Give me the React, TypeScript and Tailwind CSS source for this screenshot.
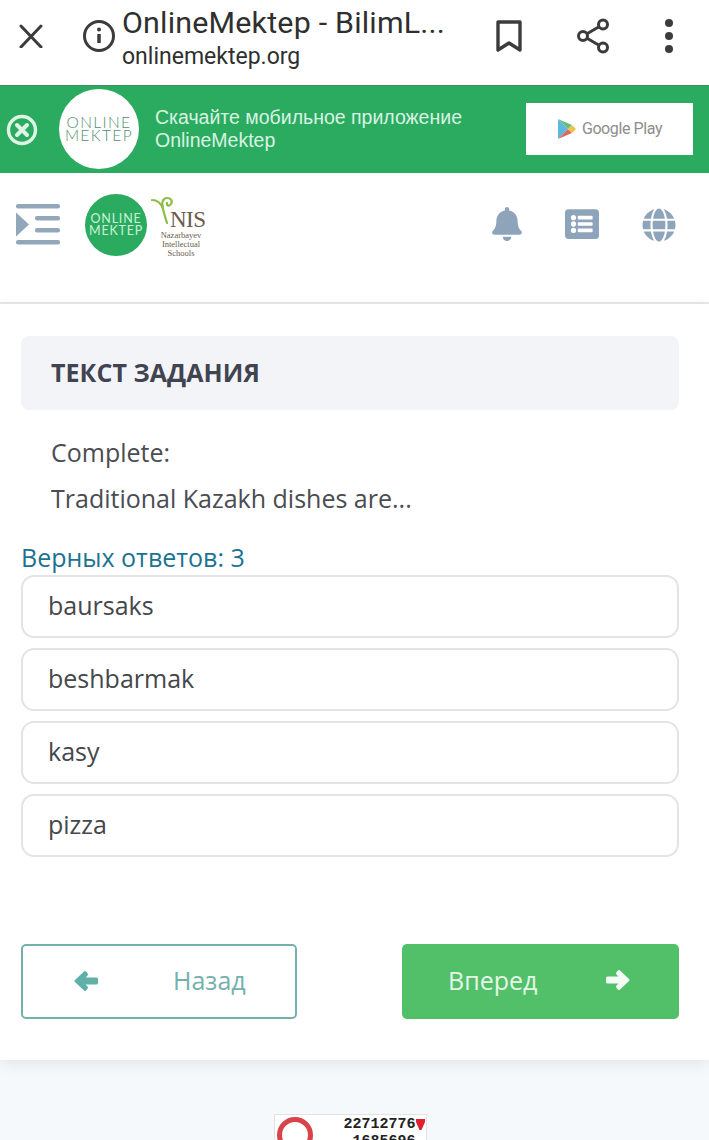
import React from 'react';
import { FaBell, FaGlobe, FaListAlt } from 'react-icons/fa';

const answers = ['baursaks', 'beshbarmak', 'kasy', 'pizza'];

function TopBar() {
  return (
    <div className="h-[85px] shrink-0 bg-white flex items-center font-['Roboto',sans-serif] text-[#2f2f2f]">
      <svg className="ml-[19px] -mt-[14px] w-[24px] h-[24px] shrink-0" viewBox="0 0 24 24" fill="none" stroke="#3c3c3c" strokeWidth="3" strokeLinecap="round">
        <path d="M2 2l20 21M22 2L2 23" />
      </svg>
      <svg className="ml-[39px] -mt-[14px] w-[34px] h-[34px] shrink-0" viewBox="0 0 34 34" fill="none" stroke="#3c3c3c">
        <circle cx="17" cy="17" r="14.5" strokeWidth="3" />
        <path d="M17 15v9" strokeWidth="3.5" />
        <circle cx="17" cy="10.5" r="2" fill="#3c3c3c" stroke="none" />
      </svg>
      <div className="ml-[6px] w-[351px] -mt-[10px]">
        <div className="text-[30.4px] leading-[36px] tracking-[0.2px] whitespace-nowrap">OnlineMektep - BilimL...</div>
        <div className="text-[23px] leading-[28px] mt-[2px]">onlinemektep.org</div>
      </div>
      <svg className="ml-[22px] -mt-[14px] w-[28px] h-[34px] shrink-0" viewBox="0 0 28 34" fill="none" stroke="#3c3c3c" strokeWidth="3.4" strokeLinejoin="round">
        <path d="M3 3h22v28l-11-7-11 7z" />
      </svg>
      <svg className="ml-[53px] -mt-[14px] w-[36px] h-[36px] shrink-0" viewBox="0 0 36 36" fill="none" stroke="#3c3c3c" strokeWidth="3">
        <circle cx="27" cy="6.5" r="4.5" />
        <circle cx="7" cy="18" r="4.5" />
        <circle cx="27" cy="29.5" r="4.5" />
        <path d="M11 15.7l12-7M11 20.3l12 7" />
      </svg>
      <div className="ml-[53px] -mt-[14px] flex flex-col gap-[5px] shrink-0">
        <span className="block w-[8px] h-[8px] rounded-full bg-[#3c3c3c]" />
        <span className="block w-[8px] h-[8px] rounded-full bg-[#3c3c3c]" />
        <span className="block w-[8px] h-[8px] rounded-full bg-[#3c3c3c]" />
      </div>
    </div>
  );
}

function AppBanner() {
  return (
    <div className="h-[88px] shrink-0 bg-[#2bab5f] border-t border-[#3f8f62] flex items-center">
      <svg className="ml-[6px] w-[32px] h-[32px] shrink-0" viewBox="0 0 32 32" fill="none" stroke="#def5e6">
        <circle cx="16" cy="16" r="13.5" strokeWidth="3.4" />
        <path d="M11 11l10 10M21 11L11 21" strokeWidth="4" strokeLinecap="round" />
      </svg>
      <div className="ml-[21px] -mt-[2px] w-[80px] h-[80px] rounded-full bg-white flex flex-col items-center justify-center shrink-0 font-['Lato',sans-serif] font-light text-[#4f8f72] text-[15.5px] leading-[13px] tracking-[1.4px]">
        <span>ONLINE</span>
        <span>MEKTEP</span>
      </div>
      <div className="ml-[16px] -mt-[2px] w-[371px] font-['Liberation_Sans',sans-serif] text-[#d9f3e3] text-[19.5px] leading-[23px]">
        <div>Скачайте мобильное приложение</div>
        <div>OnlineMektep</div>
      </div>
      <div className="-mt-[2px] w-[167px] h-[52px] bg-white flex items-center justify-center gap-[5px] shrink-0">
        <svg className="w-[20px] h-[22px]" viewBox="0 0 20 22">
          <path d="M1 1v20l10-10z" fill="#5cb8dc" />
          <path d="M1 1l10 10 4-4z" fill="#69bd7c" />
          <path d="M1 21l10-10 4 4z" fill="#dd6a62" />
          <path d="M15 7l-4 4 4 4 4-4z" fill="#eec34a" />
        </svg>
        <span className="font-['Roboto',sans-serif] text-[#8d8d8d] text-[16px] tracking-[-0.4px]">Google Play</span>
      </div>
    </div>
  );
}

function SiteHeader() {
  return (
    <div className="h-[131px] shrink-0 bg-white border-b-2 border-[#e6e7e8] flex items-start">
      <svg className="ml-[16px] mt-[31px] w-[44px] h-[42px] shrink-0" viewBox="0 0 44 42" fill="#93a7ba">
        <rect y="0" width="44" height="4.5" rx="2" />
        <rect x="19" y="12" width="25" height="4.5" rx="2" />
        <rect x="19" y="24" width="25" height="4.5" rx="2" />
        <rect y="36" width="44" height="4.5" rx="2" />
        <path d="M0 8.500l13 12-13 12z" />
      </svg>
      <div className="ml-[25px] mt-[21px] w-[62px] h-[62px] rounded-full bg-[#2bab5f] flex flex-col items-center justify-center shrink-0 font-['Lato',sans-serif] text-[#c9f2d8] text-[12.5px] leading-[12px] tracking-[0.8px]">
        <span>ONLINE</span>
        <span>MEKTEP</span>
      </div>
      <div className="relative ml-[4px] mt-[23px] w-[54px] h-[60px] shrink-0 font-['Liberation_Serif',serif] text-[#6d5a4c] text-center">
        <svg className="absolute left-0 top-0 w-[24px] h-[30px]" viewBox="0 0 24 30" fill="none" stroke="#8fbc45" strokeWidth="2.2" strokeLinecap="round">
          <path d="M1 4c5 0 9 3 11 9 1 4 2 8 4 14" />
          <path d="M12 11c-2-4 0-9 4-9s6 3 4 6-5 1-4-1" />
        </svg>
        <div className="absolute left-[19px] top-[12px] text-[23px] leading-[23px] tracking-[-0.5px]">NIS</div>
        <div className="absolute left-[6px] w-[48px] top-[35px] text-[8.5px] leading-[9px]">
          <div>Nazarbayev</div>
          <div>Intellectual</div>
          <div>Schools</div>
        </div>
      </div>
      <FaBell className="ml-[287px] mt-[34px] w-[30px] h-[34px] shrink-0 text-[#8ea4ba]" />
      <FaListAlt className="ml-[43px] mt-[34px] w-[34px] h-[34px] shrink-0 text-[#8ea4ba]" />
      <FaGlobe className="ml-[43px] mt-[35px] w-[34px] h-[34px] shrink-0 text-[#8ea4ba]" />
    </div>
  );
}

function NavButtons() {
  return (
    <div className="mt-[87px] flex justify-between">
      <button className="w-[276px] h-[75px] rounded-[5px] border-2 border-[#74b1ad] bg-white flex items-center text-[#74b1ad] text-[25px]">
        <svg className="ml-[50px] -mt-[2px] w-[26px] h-[24px] shrink-0" viewBox="0 0 26 24" fill="#5fb0a9" stroke="#5fb0a9" strokeLinejoin="round">
          <path d="M12 3.500L3 12l9 8.500 1.500-2-4.500-4.500H23.500V10H9l4.500-4.500z" strokeWidth="3" />
        </svg>
        <span className="ml-[74px] -mt-[1px]">Назад</span>
      </button>
      <button className="w-[277px] h-[75px] rounded-[5px] bg-[#52c069] flex items-center text-[#e4f6e8] text-[25px]">
        <span className="ml-[46px] -mt-[1px]">Вперед</span>
        <svg className="ml-[68px] -mt-[4px] w-[26px] h-[24px] shrink-0" viewBox="0 0 26 24" fill="#f4fbf5" stroke="#f4fbf5" strokeLinejoin="round">
          <path d="M14 3.500L23 12l-9 8.500-1.500-2 4.500-4.500H2.500V10H17l-4.500-4.500z" strokeWidth="3" />
        </svg>
      </button>
    </div>
  );
}

function FooterCounter() {
  return (
    <div className="flex-1 min-h-0 bg-[#f6f9fb] flex justify-center pt-[54px] pr-[9px] overflow-hidden">
      <div className="w-[153px] h-[50px] bg-white border border-[#e3e3e3] flex overflow-hidden">
        <div className="ml-[2px] mt-[2px] w-[36px] h-[36px] rounded-full border-[5px] border-[#d9434a] shrink-0" />
        <div className="ml-[31px] pt-[1px] font-['Liberation_Mono',monospace] font-bold text-[#222] text-[15px] leading-[17px]">
          <div className="flex items-center whitespace-nowrap">
            22712776
            <svg className="w-[9px] h-[11px] shrink-0" viewBox="0 0 9 11" fill="#e0202c">
              <path d="M0 0h9v3L5.500 11h-2L0 3z" />
            </svg>
          </div>
          <div className="whitespace-nowrap pl-[9px]">1685696</div>
        </div>
      </div>
    </div>
  );
}

export default function App() {
  return (
    <div className="w-[709px] h-[1140px] overflow-hidden flex flex-col bg-white font-['Open_Sans',sans-serif]">
      <TopBar />
      <AppBanner />
      <SiteHeader />
      <div className="bg-white pl-[21px] pr-[30px] pt-[32px] h-[756px] shrink-0 shadow-[0_4px_14px_rgba(0,0,0,0.08)] relative">
        <div className="h-[74px] rounded-[8px] bg-[#f3f4f8] flex items-center pl-[30px]">
          <h2 className="text-[25px] font-bold text-[#3f4450] tracking-[0.05px]">ТЕКСТ ЗАДАНИЯ</h2>
        </div>
        <div className="pl-[30px] pt-[19px] text-[25px] leading-[46px] text-[#4a4c52]">
          <p>Complete:</p>
          <p>Traditional Kazakh dishes are...</p>
        </div>
        <div className="mt-[20px] text-[25px] leading-[32px] text-[#1b7391]">Верных ответов: 3</div>
        <div className="mt-[2px] flex flex-col gap-[10px]">
          {answers.map(answer => (
            <div key={answer} className="h-[63px] rounded-[13px] border-2 border-[#e3e4e6] bg-white flex items-center pl-[25px] pb-[2px] text-[25px] text-[#45474c]">
              {answer}
            </div>
          ))}
        </div>
        <NavButtons />
      </div>
      <FooterCounter />
    </div>
  );
}
